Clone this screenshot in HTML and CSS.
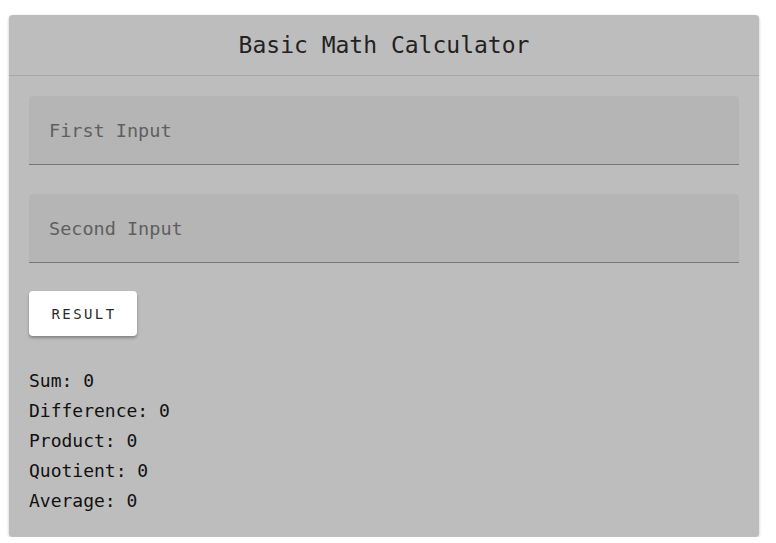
FILE: index.html
```html
<!DOCTYPE html>
<html>
<head>
<meta charset="utf-8">
<link rel="stylesheet" href="styles.css">
</head>
<body>
<div class="card">
  <div class="card-header">Basic Math Calculator</div>
  <div class="card-body">
    <div class="field"><input class="input" type="text" placeholder="First Input"></div>
    <div class="field"><input class="input" type="text" placeholder="Second Input"></div>
    <button class="btn">RESULT</button>
    <div class="results">
      <div class="line">Sum: 0</div>
      <div class="line">Difference: 0</div>
      <div class="line">Product: 0</div>
      <div class="line">Quotient: 0</div>
      <div class="line">Average: 0</div>
    </div>
  </div>
</div>
</body>
</html>
```

FILE: styles.css
```css
html, body {
  margin: 0;
  padding: 0;
  background: #ffffff;
}
body {
  padding: 15px 17px 0 9px;
  font-family: "DejaVu Sans Mono", "Liberation Mono", monospace;
}
.card {
  width: 750px;
  height: 522px;
  box-sizing: border-box;
  background: #bdbdbd;
  border-radius: 4px;
  box-shadow: 0 1px 3px rgba(0,0,0,0.25);
  display: flex;
  flex-direction: column;
}
.card-header {
  height: 60px;
  border-bottom: 1px solid #a6a6a6;
  display: flex;
  align-items: center;
  justify-content: center;
  font-size: 23px;
  color: #222;
}
.card-body {
  padding: 20px 20px 0 20px;
  display: flex;
  flex-direction: column;
  align-items: flex-start;
}
.field {
  width: 710px;
  margin-bottom: 29px;
}
.field + .field {
  margin-bottom: 28px;
}
.input {
  display: block;
  width: 100%;
  height: 69px;
  box-sizing: border-box;
  border: none;
  border-bottom: 1px solid #777777;
  border-radius: 4px 4px 0 0;
  background: #b5b5b5;
  padding: 0 20px;
  font-family: "DejaVu Sans Mono", "Liberation Mono", monospace;
  font-size: 18.5px;
  color: #333;
  outline: none;
}
.input::placeholder {
  color: #5f5f5f;
}
.btn {
  width: 108px;
  height: 45px;
  border: none;
  border-radius: 4px;
  background: #ffffff;
  box-shadow: 0 2px 3px rgba(0,0,0,0.3);
  font-family: "DejaVu Sans Mono", "Liberation Mono", monospace;
  font-size: 14px;
  letter-spacing: 2.4px;
  padding: 0 0 0 2px;
  color: #2a2a2a;
  cursor: pointer;
}
.results {
  margin-top: 30px;
  font-size: 18px;
  line-height: 30px;
  color: #111;
}
```
